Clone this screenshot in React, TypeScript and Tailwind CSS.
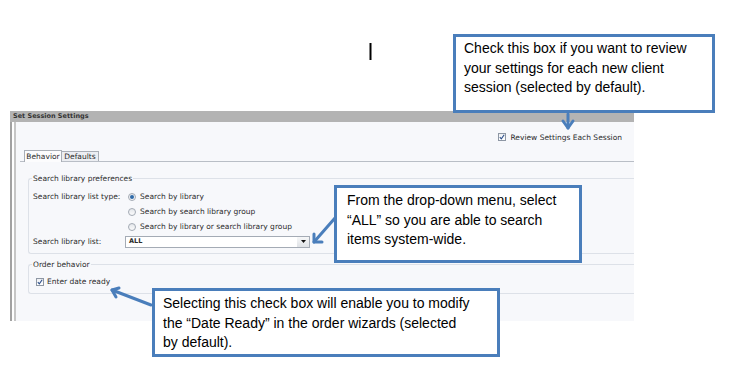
import React from 'react';

const ui = { fontFamily: '"DejaVu Sans", Verdana, sans-serif' };
const arial = { fontFamily: '"Liberation Sans", Arial, sans-serif' };

function CheckBox() {
  return (
    <span className="inline-flex w-[8px] h-[8px] border border-[#8e97a4] bg-gradient-to-b from-[#eef0f3] to-white items-center justify-center shrink-0">
      <svg width="6" height="6" viewBox="0 0 6 6">
        <path d="M0.8 3.2 L2.3 4.8 L5.2 0.8" fill="none" stroke="#2d4f8a" strokeWidth="1.1" />
      </svg>
    </span>
  );
}

function Radio({ on }: { on?: boolean }) {
  return (
    <span className="inline-flex w-[8px] h-[8px] rounded-full border border-[#a3aab4] bg-gradient-to-b from-[#e4e7eb] to-[#fbfbfc] items-center justify-center shrink-0">
      {on && <span className="w-[4px] h-[4px] rounded-full bg-[#2f6aa8]" />}
    </span>
  );
}

function Callout({ className, children }: { className: string; children: React.ReactNode }) {
  return (
    <div
      className={`absolute bg-white border-[3px] border-[#4a7ebb] text-[14px] leading-[19.5px] text-black ${className}`}
      style={arial}
    >
      {children}
    </div>
  );
}

export default function App() {
  return (
    <div className="relative w-[744px] h-[388px] bg-white overflow-hidden pt-[111px] pl-[10px]">
      <div className="w-[624px] text-[7.5px] leading-[9px] text-[#2b2b2b]" style={ui}>
        {/* title bar */}
        <div className="h-[11px] bg-[#b3b3b3] flex items-center pl-[3px]">
          <span className="font-bold text-[#333] text-[6.5px]">Set Session Settings</span>
        </div>

        <div className="flex h-[199px]">
          <div className="w-[6px] border-l-[2px] border-r-[2px] border-l-[#a2a2a2] border-r-[#c6c6c6] bg-white" />
          <div className="flex-1 bg-[#f7f8fb]">
            <div className="flex justify-end pr-[12px] pt-[8px] pb-[6px]">
              <div className="h-[14px] flex items-center gap-[4px]">
                <CheckBox />
                <span>Review Settings Each Session</span>
              </div>
            </div>

            {/* tabs */}
            <div className="ml-[4px] border-b border-[#b9bec6] h-[12px] flex items-end pl-[4px]">
              <div className="h-[12px] w-[38px] -mb-px bg-[#fcfcfd] border border-b-0 border-[#a9aeb6] flex items-center justify-center">
                Behavior
              </div>
              <div className="h-[10px] w-[37px] bg-[#eceef2] border border-b-0 border-l-0 border-[#a9aeb6] flex items-center justify-center">
                Defaults
              </div>
            </div>

            {/* panel */}
            <div className="pl-[12px] pt-[12px]">
              <fieldset className="border border-r-0 border-[#dde1e8] rounded-l-[3px] px-[4px] pt-[6px] pb-[4px]">
                <legend className="px-[1px] -ml-[1px]">Search library preferences</legend>
                <div className="grid grid-cols-[92px_1fr]">
                  <div className="h-[15px] flex items-center">Search library list type:</div>
                  <div className="h-[15px] flex items-center gap-[4px] pl-[3px]">
                    <Radio on />
                    <span>Search by library</span>
                  </div>
                  <div />
                  <div className="h-[15px] flex items-center gap-[4px] pl-[3px]">
                    <Radio />
                    <span>Search by search library group</span>
                  </div>
                  <div />
                  <div className="h-[15px] flex items-center gap-[4px] pl-[3px]">
                    <Radio />
                    <span>Search by library or search library group</span>
                  </div>
                  <div className="h-[15px] flex items-center">Search library list:</div>
                  <div className="h-[15px] flex items-center">
                    <div className="w-[185px] h-[12px] border border-[#a4abb5] bg-white flex items-center">
                      <span className="flex-1 pl-[3px] font-bold text-[6.5px]">ALL</span>
                      <span className="w-[12px] h-full bg-gradient-to-b from-[#f6f7f8] to-[#dfe2e6] flex items-center justify-center">
                        <svg width="5" height="3" viewBox="0 0 5 3">
                          <path d="M0 0 H5 L2.5 3 Z" fill="#111" />
                        </svg>
                      </span>
                    </div>
                  </div>
                </div>
              </fieldset>

              <fieldset className="mt-[6px] border border-r-0 border-[#dde1e8] rounded-l-[3px] px-[4px] pt-[5px] pb-[4px]">
                <legend className="px-[1px] -ml-[1px]">Order behavior</legend>
                <div className="h-[15px] flex items-center gap-[3px] pl-[3px]">
                  <CheckBox />
                  <span>Enter date ready</span>
                </div>
              </fieldset>
            </div>
          </div>
        </div>
      </div>

      <Callout className="left-[453px] top-[34px] w-[262px] h-[79px] pl-[8px] pt-[2px]">
        Check this box if you want to review
        <br />
        your settings for each new client
        <br />
        session (selected by default).
      </Callout>

      <Callout className="left-[334px] top-[185px] w-[248px] h-[78px] pl-[10px] pt-[3px]">
        From the drop-down menu, select
        <br />
        “ALL” so you are able to search
        <br />
        items system-wide.
      </Callout>

      <Callout className="left-[152px] top-[288px] w-[348px] h-[69px] pl-[8px] pt-[3px]">
        Selecting this check box will enable you to modify
        <br />
        the “Date Ready” in the order wizards (selected
        <br />
        by default).
      </Callout>

      <svg className="absolute inset-0 pointer-events-none" width="744" height="388">
        <line x1="370.5" y1="43" x2="370.5" y2="60" stroke="#000" strokeWidth="2" />
        <g stroke="#4a7ebb" strokeWidth="3" fill="none" strokeLinecap="round" strokeLinejoin="round">
          <line x1="568" y1="114" x2="568" y2="128" />
          <polyline points="563,121 568,128 573,121" />
          <line x1="335" y1="218" x2="314" y2="242" />
          <polyline points="314,234 314,242 322,242" />
          <line x1="151" y1="305" x2="112" y2="290" />
          <polyline points="119,288 112,290 116,297" />
        </g>
      </svg>
    </div>
  );
}
